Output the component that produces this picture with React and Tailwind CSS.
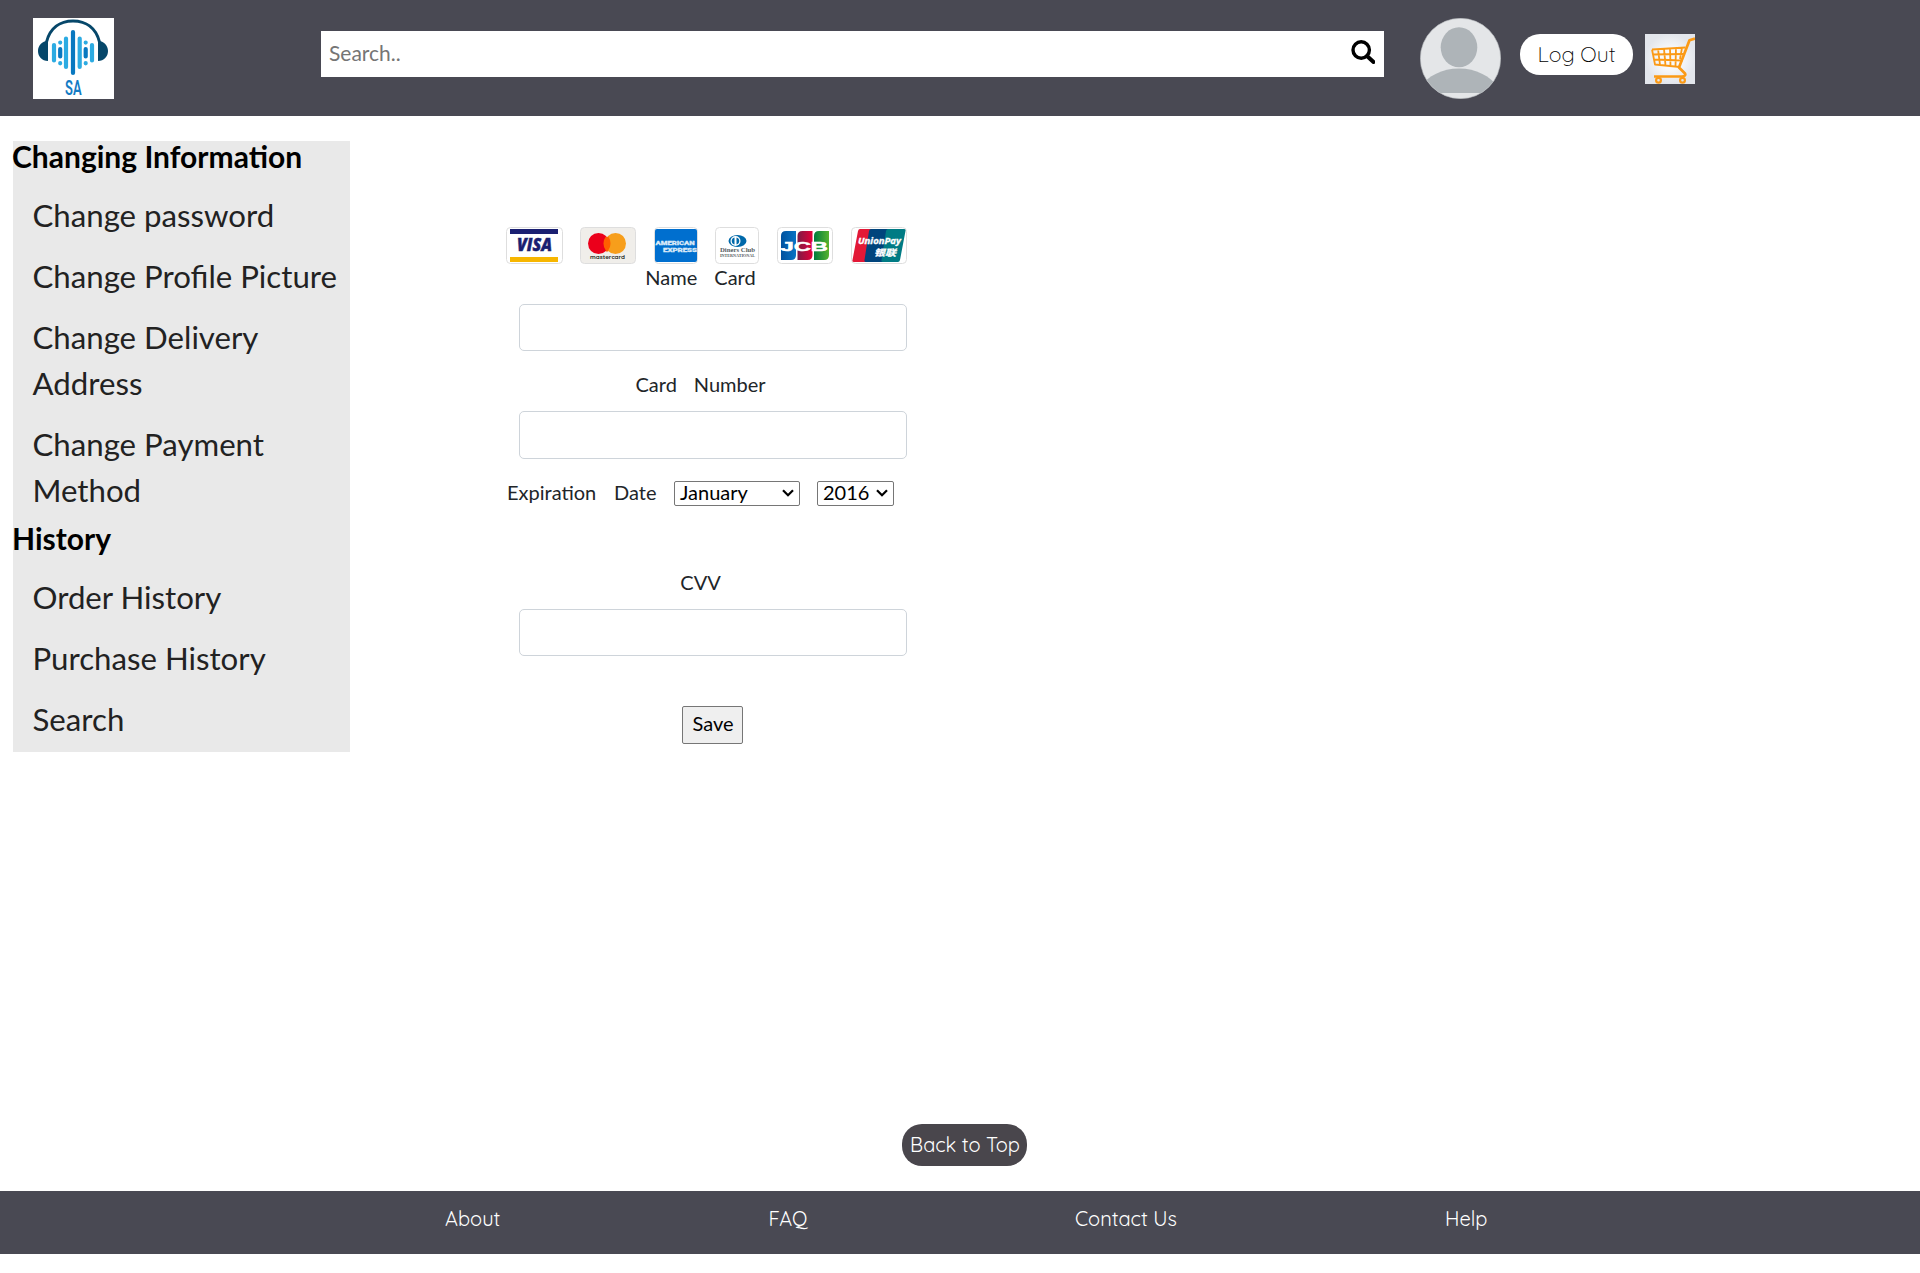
const changeLinks = ['Change password', 'Change Profile Picture', 'Change Delivery Address', 'Change Payment Method'];
const historyLinks = ['Order History', 'Purchase History', 'Search'];

function Logo() {
  return (
    <svg className="block size-[81px] bg-white" viewBox="0 0 81 81">
      <path d="M13.500 24C17 10 27 3 40 3s23 7 26.500 21" fill="none" stroke="#06476a" strokeWidth="3" />
      <path d="M15 22.500v20.500C9 43 5 38.500 5 33S9 23.500 15 22.500zM65 22.500v20.500c6 0 10-4.500 10-10s-4-9.500-10-10.500z" fill="#06476a" />
      <g strokeLinecap="round" strokeWidth="4.200">
        <path d="M21 27v15.500M33 20.500v28.500M46.700 20.500v28.500M59 27v15.500M27.200 24.500v.1M27.200 45.200v.1M52.700 24.500v.1M52.700 45.200v.1" stroke="#2cabe2" />
        <path d="M40 14v41M27.200 31v7.500M52.700 31v7.500" stroke="#0878c0" />
      </g>
      <text x="32" y="76.500" textLength="16.500" lengthAdjust="spacingAndGlyphs" fontFamily="Roboto, sans-serif" fontWeight="600" fontSize="19.500" fill="#147bc4">SA</text>
    </svg>
  );
}

function Avatar() {
  return (
    <svg className="block size-[81px]" viewBox="0 0 81 81">
      <defs><clipPath id="face"><circle cx="40.500" cy="40.500" r="40" /></clipPath></defs>
      <circle cx="40.500" cy="40.500" r="40.200" fill="#e4e6e8" stroke="#b5b9bc" strokeWidth=".6" />
      <g clipPath="url(#face)" fill="#aeb4b8">
        <ellipse cx="39" cy="29.300" rx="18.300" ry="20" />
        <path d="M0 75V69C8 58 22 50.500 39 50.500S70 58 78 69v6z" />
      </g>
    </svg>
  );
}

function Cart() {
  return (
    <svg className="block size-[50px]" viewBox="0 0 50 50">
      <defs><radialGradient id="cartbg"><stop offset=".4" stopColor="#f8f9fb" /><stop offset="1" stopColor="#e3e6ec" /></radialGradient></defs>
      <rect width="50" height="50" fill="url(#cartbg)" />
      <g fill="none" stroke="#fb9a16" strokeLinejoin="round">
        <path d="M50 4.500l-5.500 1.800L34 33.500l6 6c1 2-1 3-3 3H9" strokeWidth="2.700" />
        <path d="M7 15.500l33.500-2M7 15.500l3 15L35 33M8 20.500l31-.5M9 25.500l28.500 1M13 15l2 16M19 14.800l1.500 16.500M25 14.500l.5 17.200M31 14l-.5 18M37 13.800L35 25" strokeWidth="1.800" />
        <circle cx="13.500" cy="46.300" r="2.400" strokeWidth="2.200" /><circle cx="37.500" cy="46.300" r="2.400" strokeWidth="2.200" />
      </g>
    </svg>
  );
}

function CardFrame({ w, fill = '#fff', children }) {
  return (
    <svg width={w} height="37" viewBox={`0 0 ${w} 37`} className="block">
      <rect x=".5" y=".5" width={w - 1} height="36" rx="4" fill={fill} stroke="#dedede" />
      {children}
    </svg>
  );
}

function Cards() {
  return (
    <div className="flex h-[37px]">
      <div className="mr-[17px]"><CardFrame w={57}>
        <path d="M4 2h48v5H4z" fill="#1a1f71" /><path d="M4 30h48v5H4z" fill="#f7b600" />
        <text x="11" y="24" textLength="35" lengthAdjust="spacingAndGlyphs" fontFamily="Open Sans, sans-serif" fontWeight="800" fontStyle="italic" fontSize="18" fill="#1a1f71" stroke="#1a1f71" strokeWidth=".5">VISA</text>
      </CardFrame></div>
      <div className="mr-[18px]"><CardFrame w={56} fill="#f0eeea">
        <circle cx="35.500" cy="16.500" r="10.500" fill="#f79e1b" /><circle cx="18.500" cy="16.500" r="10.500" fill="#eb001b" />
        <path d="M27 10.300a10.500 10.500 0 0 1 0 12.400a10.500 10.500 0 0 1 0-12.400" fill="#ff5f00" stroke="#ff5f00" strokeWidth="3" />
        <text x="10" y="31.500" textLength="35" lengthAdjust="spacingAndGlyphs" fontFamily="Quicksand, sans-serif" fontWeight="700" fontSize="5.500" fill="#231f20">mastercard</text>
      </CardFrame></div>
      <div className="mr-[17px]"><CardFrame w={44}>
        <rect x="1" y="2" width="42" height="33" rx="2" fill="#006fcf" />
        <g fontFamily="Roboto, sans-serif" fontWeight="900" fontSize="6" fill="#d8e9f8" stroke="#d8e9f8" strokeWidth=".3">
          <text x="1.500" y="17.500" textLength="39" lengthAdjust="spacingAndGlyphs">AMERICAN</text>
          <text x="9" y="24.700" textLength="34" lengthAdjust="spacingAndGlyphs">EXPRESS</text>
        </g>
      </CardFrame></div>
      <div className="mr-[18px]"><CardFrame w={44}>
        <ellipse cx="22.500" cy="14" rx="9" ry="6" fill="#0069aa" /><circle cx="20.500" cy="14" r="5" fill="#fff" />
        <path d="M19.500 10.500a3.600 3.600 0 0 0 0 7zM21.500 10.500a3.600 3.600 0 0 1 0 7z" fill="#0069aa" />
        <text x="5" y="25" textLength="35" lengthAdjust="spacingAndGlyphs" fontFamily="Liberation Serif, serif" fontWeight="700" fontSize="6" fill="#555b60">Diners Club</text>
        <text x="5" y="29.500" textLength="35" lengthAdjust="spacingAndGlyphs" fontFamily="Liberation Serif, serif" fontWeight="700" fontSize="3.500" fill="#555b60">INTERNATIONAL</text>
      </CardFrame></div>
      <div className="mr-[18px]"><CardFrame w={56}>
        <defs>
          <linearGradient id="jb"><stop stopColor="#00519e" /><stop offset="1" stopColor="#0873c4" /></linearGradient>
          <linearGradient id="jr"><stop stopColor="#7d1b45" /><stop offset="1" stopColor="#e30038" /></linearGradient>
          <linearGradient id="jg"><stop stopColor="#007b3e" /><stop offset="1" stopColor="#55b330" /></linearGradient>
        </defs>
        <path d="M4 9q0-5 5-5h10v24q0 5-5 5H4z" fill="url(#jb)" /><path d="M20.500 9q0-5 5-5h10v24q0 5-5 5h-10z" fill="url(#jr)" /><path d="M37 9q0-5 5-5h10v24q0 5-5 5h-10z" fill="url(#jg)" />
        <g fontFamily="Liberation Sans, sans-serif" fontWeight="700" fontSize="13" fill="#fff" stroke="#fff" strokeWidth=".5">
          <text x="3.500" y="23.500" textLength="47.500" lengthAdjust="spacingAndGlyphs">JCB</text>
        </g>
      </CardFrame></div>
      <CardFrame w={56}>
        <path d="M9 2h15l-7 33H3q-2 0-1.500-2L7 4q.5-2 2-2z" fill="#e21836" /><path d="M20 2h20l-7 33H15q-2 0-1.500-2L18 4q.5-2 2-2z" fill="#00447c" /><path d="M37 2h16q2 0 1.500 2L49 33q-.5 2-2 2H32q-2 0-1.500-2L35 4q.5-2 2-2z" fill="#007b84" />
        <text x="7" y="16.500" textLength="43" lengthAdjust="spacingAndGlyphs" fontFamily="Open Sans, sans-serif" fontWeight="700" fontStyle="italic" fontSize="8.500" fill="#fff" stroke="#fff" strokeWidth=".3">UnionPay</text>
        <text x="23" y="29.300" textLength="22" lengthAdjust="spacingAndGlyphs" fontFamily="Noto Sans CJK SC, sans-serif" fontWeight="700" fontStyle="italic" fontSize="9" fill="#fff" stroke="#fff" strokeWidth=".3">银联</text>
      </CardFrame>
    </div>
  );
}

function NavGroup({ title, links }) {
  return (
    <section>
      <h2 className="-ml-px h-[46px] text-[30px] leading-[31px] font-bold text-black">{title}</h2>
      {links.map((l) => (
        <a key={l} className="block pt-[5px] pr-2 pb-2.5 pl-[19.5px] text-[31.2px] leading-[46px] text-[#222]">{l}</a>
      ))}
    </section>
  );
}

function Label({ words }) {
  return (
    <div className="flex w-[389px] justify-center gap-[17px]">
      {words.map((w) => <span key={w}>{w}</span>)}
    </div>
  );
}

function Field({ tall }) {
  return <input className={`ml-[13px] block w-[388px] rounded-[5px] border border-[#ced4da] bg-white ${tall ? 'h-12' : 'h-[47px]'}`} />;
}

function Select({ value, className }) {
  return (
    <div className={`mt-[2px] flex h-[25px] items-center justify-between rounded-[2px] border border-[#767676] bg-white pr-[5px] pl-[5px] text-black ${className}`}>
      <span className="pb-[2px] leading-[21px]">{value}</span>
      <svg width="12" height="8" viewBox="0 0 12 8"><path d="M1 1.200l5 5 5-5" fill="none" stroke="#000" strokeWidth="2.200" /></svg>
    </div>
  );
}

export default function App() {
  return (
    <div className="h-[1273px] overflow-hidden bg-white font-['Lato',sans-serif] text-[20px] leading-[30px] text-[#212529]">
      <header className="flex h-[116px] items-start bg-[#494953] pl-[33px]">
        <div className="mt-[18px] mr-[207px]"><Logo /></div>
        <div className="mt-[31px] mr-9 flex h-[46px] w-[1063px] items-center justify-between bg-white pr-[9px] pl-2">
          <span className="pb-[3px] text-[21px] text-[#757575]">Search..</span>
          <svg className="mb-1" width="24" height="24" viewBox="0 0 24 24" fill="none" stroke="#000"><circle cx="10.200" cy="10" r="8.200" strokeWidth="3.400" /><path d="M16 16l6.500 6" strokeWidth="4" strokeLinecap="round" /></svg>
        </div>
        <div className="mt-[18px] mr-[19px]"><Avatar /></div>
        <button className="mt-[34px] mr-3 h-[41px] w-[113px] rounded-[20px] bg-white pb-[2px] font-['Quicksand',sans-serif] text-[21.300px] font-light text-black">Log Out</button>
        <div className="mt-[34px]"><Cart /></div>
      </header>

      <main className="flex h-[1008px] pt-[25px] pl-[13px]">
        <aside className="h-[611px] w-[337px] bg-[#e9e9e9]">
          <NavGroup title="Changing Information" links={changeLinks} />
          <NavGroup title="History" links={historyLinks} />
        </aside>
        <form className="ml-[156px] pt-[86px]">
          <Cards />
          <div className="mt-[-2px]"><Label words={['Name', 'Card']} /></div>
          <div className="mt-3"><Field /></div>
          <div className="mt-[18px]"><Label words={['Card', 'Number']} /></div>
          <div className="mt-3"><Field tall /></div>
          <div className="mt-[18px] flex h-[30px] items-center">
            <span className="w-[107px] pl-px">Expiration</span>
            <span className="w-[61px] pl-px">Date</span>
            <Select value="January" className="mr-[17px] w-[126px]" />
            <Select value="2016" className="w-[77px]" />
          </div>
          <div className="mt-[60px]"><Label words={['CVV']} /></div>
          <div className="mt-3"><Field /></div>
          <button type="button" className="mt-[50px] ml-44 h-[38px] w-[61px] rounded-[2px] border border-[#767676] bg-[#efefef] pb-[5px] pl-px text-black">Save</button>
        </form>
      </main>

      <div className="flex h-[67px] pl-[902px]">
        <button className="h-[42px] w-[125px] rounded-[20px] bg-[#49464c] pl-px font-['Quicksand',sans-serif] text-[20px] text-white">Back to Top</button>
      </div>
      <footer className="flex h-[63px] bg-[#494953] pt-[13px] pl-[445px] font-['Quicksand',sans-serif] text-[20px] text-white">
        <a className="w-[323.500px]">About</a>
        <a className="w-[306.500px]">FAQ</a>
        <a className="w-[370px]">Contact Us</a>
        <a>Help</a>
      </footer>
    </div>
  );
}
